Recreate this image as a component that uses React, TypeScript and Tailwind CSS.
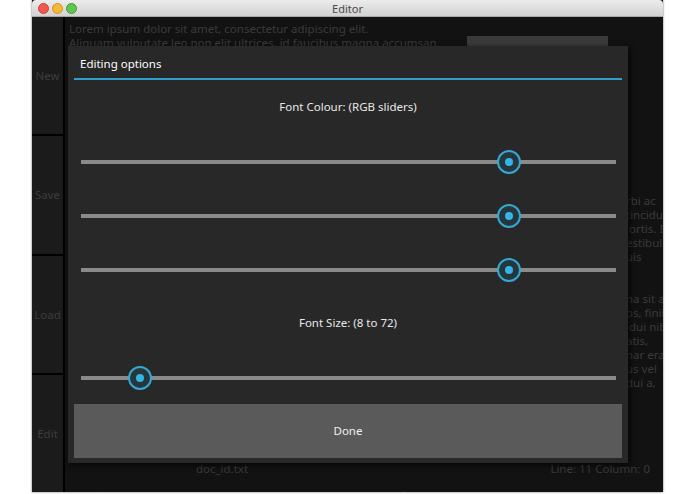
import React from "react";

const font = { fontFamily: '"Noto Sans", "Open Sans", sans-serif' };

const sideButtons = ["New", "Save", "Load", "Edit"];

// tails of the wrapped lines that stick out to the right of the dialog
const tails = [
    "rbi ac",
    "tincidunt",
    " ortis. In",
    "estibulum",
    "uis",
    "",
    "",
    "na sit amet",
    "os, finibus",
    " dui nibh",
    "atis,",
    "nar erat",
    "us vel",
    "dui a,",
];

function Slider({ value }: { value: number }) {
    return (
        <div className="h-[54px] flex items-center pl-[13px] pr-[12px] pt-[2px]">
            <div className="relative h-[4px] w-full bg-[#8a8a8a]">
                <div
                    className="absolute top-1/2 w-[24px] h-[24px] -ml-[12px] -mt-[12px] rounded-full border-2 border-[#35a8d2] bg-[#25363d] flex items-center justify-center"
                    style={{ left: `${value * 100}%` }}
                >
                    <div className="w-[8px] h-[8px] rounded-full bg-[#33b5e5]" />
                </div>
            </div>
        </div>
    );
}

export default function App() {
    return (
        <div className="w-[695px] h-[494px] bg-white overflow-hidden" style={font}>
            <div className="ml-[32px] w-[631px] h-[492px] flex flex-col bg-[#111] shadow-[0_0_2px_rgba(0,0,0,0.6)]">
                {/* title bar */}
                <div className="relative h-[17px] rounded-t-[4px] bg-gradient-to-b from-[#ececec] to-[#d2d2d2] border-b border-[#a8a8a8] flex items-center justify-center">
                    <div className="absolute left-[6px] top-[3px] flex gap-[3px]">
                        <span className="w-[11px] h-[11px] rounded-full bg-[#f2574f] border border-[#c9433c]" />
                        <span className="w-[11px] h-[11px] rounded-full bg-[#f7b83a] border border-[#cf9329]" />
                        <span className="w-[11px] h-[11px] rounded-full bg-[#5fc452] border border-[#3f9f36]" />
                    </div>
                    <span className="text-[11px] leading-none text-[#4a4a4a]">Editor</span>
                </div>

                <div className="flex flex-1 min-h-0">
                    {/* sidebar */}
                    <div className="w-[33px] flex flex-col gap-[2px] bg-black border-r-2 border-black">
                        {sideButtons.map((b) => (
                            <div
                                key={b}
                                className="flex-1 bg-[#1b1b1b] flex items-center justify-center text-[11.5px] text-[#3d3d3d]"
                            >
                                {b}
                            </div>
                        ))}
                    </div>

                    {/* editor area */}
                    <div className="relative flex-1 flex flex-col overflow-hidden bg-[#121212] text-[11.5px] leading-[14px] text-[#3b3b3b]">
                        <div className="pl-[4px] pt-[5px] whitespace-nowrap">
                            <div>Lorem ipsum dolor sit amet, consectetur adipiscing elit.</div>
                            <div className="flex items-center">
                                <span className="w-[398px] overflow-hidden">
                                    Aliquam vulputate leo non elit ultrices, id faucibus magna accumsan.
                                </span>
                                <span className="w-[141px] h-[14px] bg-[#3a3a3a]" />
                            </div>
                        </div>

                        <div className="mt-[144px] grid grid-cols-[561px_1fr] whitespace-pre">
                            {tails.map((t, i) => (
                                <React.Fragment key={i}>
                                    <span className="h-[14px]" />
                                    <span className="h-[14px] overflow-hidden">{t}</span>
                                </React.Fragment>
                            ))}
                        </div>

                        <div className="mt-auto grid grid-cols-[314px_1fr] pb-[12px]">
                            <span className="text-center">doc_id.txt</span>
                            <span className="text-right pr-[13px]">Line: 11 Column: 0</span>
                        </div>
                        <div className="h-[4px] overflow-hidden pl-[30px] text-[#1c1c1c] whitespace-nowrap">
                            Nam varius lacus ante, vitae lobortis ipsum dapibus sed. Suspendisse sit amet pretium odio, at pulvinar
                        </div>

                        {/* editing options dialog */}
                        <div className="absolute left-[3px] top-[29px] w-[560px] h-[417px] bg-[#282828] shadow-[2px_2px_6px_rgba(0,0,0,0.7)] flex flex-col px-[6px] pb-[5px] text-white">
                            <div className="h-[32px] flex items-center pl-[6px] text-[11.5px] pt-[3px]">Editing options</div>
                            <div className="h-[2px] bg-[#2f9ec8]" />
                            <div className="h-[54px] flex items-center justify-center text-[11.5px] text-[#e8e8e8]">
                                Font Colour: (RGB sliders)
                            </div>
                            <div className="-mx-[6px]">
                                <Slider value={0.8} />
                                <Slider value={0.8} />
                                <Slider value={0.8} />
                            </div>
                            <div className="h-[54px] flex items-center justify-center text-[11.5px] text-[#e8e8e8]">
                                Font Size: (8 to 72)
                            </div>
                            <div className="-mx-[6px]">
                                <Slider value={0.11} />
                            </div>
                            <button className="flex-1 bg-[#5a5a5a] text-[11.5px] text-[#f0f0f0] flex items-center justify-center">
                                Done
                            </button>
                        </div>
                    </div>
                </div>
            </div>
        </div>
    );
}
